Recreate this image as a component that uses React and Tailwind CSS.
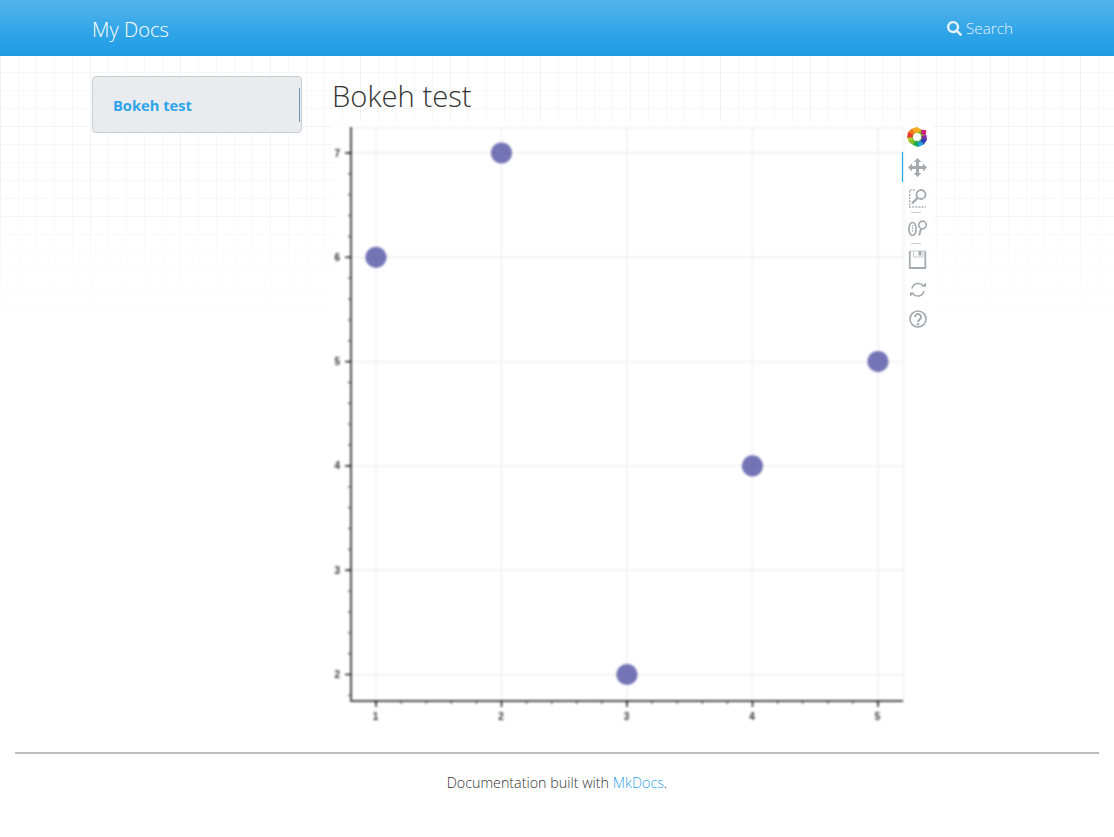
import React from "react";
import { FaSearch } from "react-icons/fa";

const xs = [1, 2, 3, 4, 5];
const ys = [2, 3, 4, 5, 6, 7];
const points = [
  [1, 6],
  [2, 7],
  [3, 2],
  [4, 4],
  [5, 5],
];

// plot origin is the top left of the svg (333,122)
const px = (v) => 43 + (v - 1) * 125.5;
const py = (v) => 31 + (7 - v) * 104.3;

const minorX = [];
for (let v = 0.85; v <= 5.2; v += 0.2) {
  const r = Math.round(v * 5) / 5;
  if (r >= 0.9 && r <= 5.2) minorX.push(r);
}
const minorY = [];
for (let v = 1.8; v <= 7.2; v += 0.2) minorY.push(Math.round(v * 5) / 5);

const Plot = () => (
  <svg width="600" height="600" viewBox="0 0 600 600" className="ml-px block bg-white">
    <g className="blur-[0.8px]">
      <rect x="18" y="5" width="552" height="1.5" fill="#f0f0f0" />
      <rect x="570" y="5" width="1.5" height="574" fill="#efefef" />
      {xs.map((v) => (
        <line key={v} x1={px(v)} x2={px(v)} y1="5" y2="579" stroke="#eeeef2" strokeWidth="1.3" />
      ))}
      {ys.map((v) => (
        <line key={v} x1="18" x2="570" y1={py(v)} y2={py(v)} stroke="#eeeeee" strokeWidth="1.4" />
      ))}
      <line x1="18" x2="18" y1="5" y2="580" stroke="#4a4a4a" strokeWidth="2" />
      <line x1="17" x2="570" y1="579" y2="579" stroke="#4a4a4a" strokeWidth="2" />
      {minorY.map((v) => (
        <line key={v} x1="15" x2="18" y1={py(v)} y2={py(v)} stroke="#333" />
      ))}
      {ys.map((v) => (
        <g key={v}>
          <line x1="12" x2="18" y1={py(v)} y2={py(v)} stroke="#111" strokeWidth="1.4" />
          <text x="1.500" y={py(v) + 3.5} fontSize="10" fontWeight="700" fill="#333" fontFamily="Liberation Sans, sans-serif">
            {v}
          </text>
        </g>
      ))}
      {minorX.map((v) => (
        <line key={v} x1={px(v)} x2={px(v)} y1="579" y2="582" stroke="#333" />
      ))}
      {xs.map((v) => (
        <g key={v}>
          <line x1={px(v)} x2={px(v)} y1="579" y2="585" stroke="#111" strokeWidth="1.4" />
          <text x={px(v) - 0.5} y="598" textAnchor="middle" fontSize="10" fontWeight="700" fill="#333" fontFamily="Liberation Sans, sans-serif">
            {v}
          </text>
        </g>
      ))}
      {points.map(([a, b]) => (
        <circle key={a} cx={px(a)} cy={py(b)} r="10.600" fill="#45459f" fillOpacity="0.75" />
      ))}
    </g>

    {/* toolbar */}
    <g>
      <line x1="569.5" x2="569.5" y1="30" y2="60" stroke="#26aae1" strokeWidth="1.200" />
      <g transform="translate(574,5)">
        <circle cx="10" cy="10" r="8.500" fill="#7cbd2a" />
        <path d="M10 0l4.500 2.500L10 6.500z" fill="#f6b01e" />
        <path d="M14.500 2.500l5 1-1 5-4.500-1.500z" fill="#d21d7f" />
        <path d="M19.500 8l.5 5-5 1-.5-5z" fill="#8330a8" />
        <path d="M20 12.500l-3 5-4-3.500 2-2.500z" fill="#2c44b6" />
        <path d="M17 17.500l-6 2.500-1-5 3-1z" fill="#1c9fd8" />
        <path d="M11 20l-5-2 2.500-4.500 2.500 1z" fill="#18a85a" />
        <path d="M6 18l-4-3 4-3.500 2 2.500z" fill="#7cbd2a" />
        <path d="M2 15.500l-2-5.500 5 0 1 2z" fill="#a7cf34" />
        <path d="M0 10.500l1-5.500 5 2-.500 3.500z" fill="#f0372f" />
        <path d="M1 5l4-3.500 3 4-1.500 2.500z" fill="#f3771f" />
        <path d="M5 1.500L10 0v5.500l-2 1z" fill="#f6a81b" />
        <circle cx="10" cy="10" r="4" fill="#ffffff" />
      </g>
      <g fill="#a3abb0" transform="translate(575,36)">
        <path d="M9.600 0l3.800 4h-2.400v4h4V5.600l4 4-4 3.800v-2.400h-4v4h2.400L9.600 19l-4-4h2.400v-4h-4v2.400L0 9.500 4 5.600V8h4V4H5.600z" />
      </g>
      <g transform="translate(576,67)" fill="none" stroke="#a3abb0">
        <path d="M.700 2v16h16" strokeDasharray="1.800 1.300" strokeWidth="1.500" />
        <path d="M.700 1h6" strokeDasharray="1.800 1.300" strokeWidth="1.500" />
        <circle cx="12" cy="5.500" r="4.500" strokeWidth="1.900" />
        <path d="M8.500 9l-5.500 5.500" strokeWidth="2.400" />
      </g>
      <line x1="578" x2="588" y1="90.500" y2="90.500" stroke="#c8cccf" />
      <g transform="translate(575,98)" fill="none" stroke="#a3abb0">
        <ellipse cx="4.500" cy="9" rx="3.600" ry="6.500" strokeWidth="1.700" />
        <path d="M4.500 5v7" strokeWidth="1.300" strokeDasharray="1.500 1" />
        <circle cx="14.500" cy="5" r="3.800" strokeWidth="1.700" />
        <path d="M13 8.500l-1.800 7" strokeWidth="1.900" />
      </g>
      <line x1="578" x2="588" y1="121.500" y2="121.500" stroke="#c8cccf" />
      <g transform="translate(576,128)">
        <path d="M.800 1v17h15.500V1" fill="none" stroke="#a3abb0" strokeWidth="1.800" />
        <path d="M1 1h16" stroke="#c9ced1" strokeWidth="1" />
        <rect x="9.500" y="1" width="3" height="4.500" fill="#a3abb0" />
        <path d="M4.500 1v6h9.500V1" fill="none" stroke="#c5cacd" />
      </g>
      <g transform="translate(577,159)" fill="none" stroke="#a3abb0" strokeWidth="1.500">
        <path d="M2 7.500A6.500 6.500 0 0 1 13.500 5" />
        <path d="M14 10A6.500 6.500 0 0 1 2.500 12.500" />
        <path d="M11.500 5.800h4.500V1.500z" fill="#a3abb0" stroke="none" />
        <path d="M4.500 11.500H0v4.300z" fill="#a3abb0" stroke="none" />
      </g>
      <g transform="translate(576,188)" fill="none" stroke="#a3abb0">
        <circle cx="9" cy="9" r="8" strokeWidth="1.700" />
        <path d="M6 7a3 3 0 1 1 4.800 2.400c-1.200.800-1.800 1.300-1.800 2.600" strokeWidth="1.900" />
        <circle cx="9" cy="14.200" r="1.200" fill="#a3abb0" stroke="none" />
      </g>
    </g>
  </svg>
);

const App = () => (
  <div className="min-h-[837px] bg-white bg-[linear-gradient(to_bottom,rgba(255,255,255,0)_180px,#fff_325px,#fff_100%),linear-gradient(to_right,#f2f2f2_1px,transparent_1px),linear-gradient(to_bottom,#f2f2f2_1px,transparent_1px),linear-gradient(to_right,#f7f7f7_1px,transparent_1px),linear-gradient(to_bottom,#f7f7f7_1px,transparent_1px)] [background-size:100%_100%,90px_90px,90px_90px,18px_18px,18px_18px] [background-position:0_0,0_36px,0_36px,0_0,0_0] font-['Open_Sans',sans-serif] text-[#555]">
    <nav className="h-14 bg-[linear-gradient(#54b4eb,#2fa4e7_60%,#1d9ce5)] text-white">
      <div className="flex h-full items-center justify-between pl-[92px] pr-[101px]">
        <a className="mt-[2px] text-[20.200px] font-light">My Docs</a>
        <a className="flex items-center gap-[4px] text-[15.300px] font-light text-[#e3f2fc]">
          <FaSearch className="h-[15px] w-[15px]" />
          Search
        </a>
      </div>
    </nav>

    <main className="flex items-start pl-[92px] pt-5">
      <aside className="w-[210px] shrink-0">
        <div className="flex h-[57px] items-center justify-between rounded border border-[#c9cdd1] bg-[#e9ecef] pl-5 pr-[1px]">
          <span className="mt-[2px] text-[14.700px] font-bold text-[#2fa4e7]">Bokeh test</span>
          <span className="h-[34px] w-px bg-[#6d96b3]"></span>
        </div>
      </aside>
      <section className="ml-[30px]">
        <h1 className="-mt-[2px] mb-0 h-[48px] text-[29.200px] font-light leading-[44px] text-[#333]">Bokeh test</h1>
        <Plot />
      </section>
    </main>

    <footer className="mt-[30px] px-[15px]">
      <hr className="border-t-2 border-[#bdbdbd]" />
      <p className="pt-[18px] text-center text-[14.300px] font-light text-[#333]">
        Documentation built with <a className="text-[#2fa4e7]">MkDocs</a>.
      </p>
    </footer>
  </div>
);

export default App;
